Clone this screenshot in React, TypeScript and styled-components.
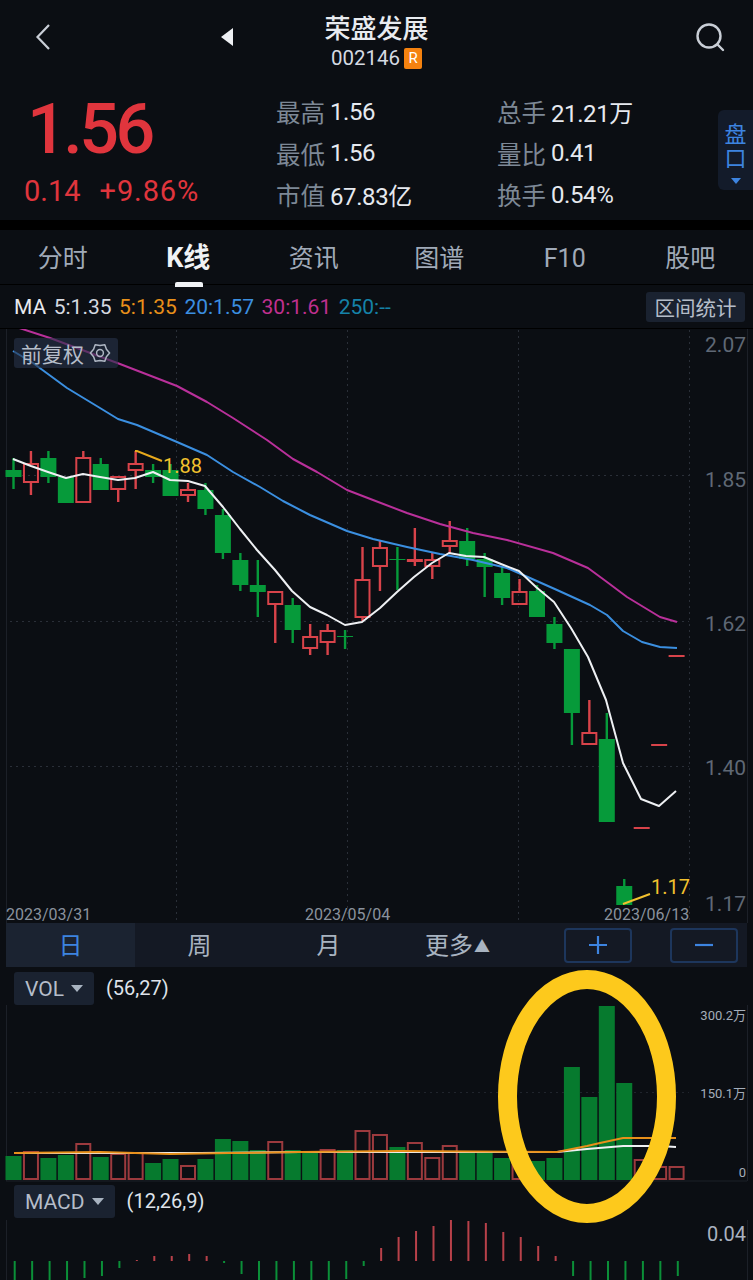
import styled, { createGlobalStyle } from 'styled-components';

const FONT = `Roboto, "Noto Sans CJK SC", sans-serif`;
const UP = '#d8434a';
const DOWN = '#069a3a';
const VOL_UP = '#9c3a3e';
const VOL_DOWN = '#067a2e';
const GRID = '#2a2f38';

const GlobalStyle = createGlobalStyle`
   html, body {
      margin: 0;
      background: #0b0e13;
      font-family: ${FONT};
   }
`;

const Page = styled.main`
   position: relative;
   width: 753px;
   height: 1280px;
   overflow: hidden;
   background: #0b0e13;
   color: #e6e9ef;
`;

const TitleBar = styled.header`
   display: grid;
   grid-template-columns: 221px 12px 1fr 12px 221px;
   align-items: center;
   height: 78px;
`;

const IconSlot = styled.div<{ $pad: string; $justify?: string }>`
   display: flex;
   justify-content: ${(p) => p.$justify || 'flex-start'};
   padding: ${(p) => p.$pad};
`;

const TitleBlock = styled.div`
   display: flex;
   flex-direction: column;
   align-items: center;
   padding-top: 6px;
`;

const StockName = styled.div`
   font-size: 26px;
   line-height: 30px;
   font-weight: 500;
   color: #e8ebf0;
`;

const StockCode = styled.div`
   display: flex;
   align-items: center;
   gap: 4px;
   margin-top: 2px;
   font-size: 20.5px;
   line-height: 24px;
   color: #d5dae2;
`;

const RBadge = styled.span`
   width: 18px;
   height: 21px;
   border-radius: 2px;
   background: #f5820f;
   color: #fff;
   font-size: 15px;
   line-height: 21px;
   text-align: center;
`;

const QuoteRow = styled.section`
   display: flex;
   box-sizing: border-box;
   height: 142px;
   padding-top: 13px;
`;

const PriceCol = styled.div`
   width: 276px;
   flex: none;
   color: #e0353d;
`;

const BigPrice = styled.div`
   padding: 0 0 0 27px;
   font-size: 70px;
   line-height: 76px;
   letter-spacing: -3.5px;
   font-weight: 500;
`;

const ChangeRow = styled.div`
   display: flex;
   gap: 19px;
   padding: 5px 0 0 24px;
   font-size: 29px;
   line-height: 38px;
`;

const PercentText = styled.span`
   letter-spacing: 0.9px;
`;

const StatGrid = styled.div`
   display: grid;
   grid-template-columns: 221px 190px;
   grid-auto-rows: 41.5px;
   align-items: center;
   height: 125px;
   width: 411px;
   flex: none;
`;

const Stat = styled.div`
   display: flex;
   align-items: center;
   gap: 5px;
   font-size: 24px;
   letter-spacing: -0.4px;
   color: #e6e9ef;
   white-space: nowrap;

   span {
      color: #7d8896;
      letter-spacing: 0;
      font-size: 24.5px;
   }
`;

const SideTab = styled.aside`
   flex: none;
   display: flex;
   flex-direction: column;
   align-items: center;
   box-sizing: border-box;
   width: 35px;
   height: 80px;
   margin: 19px 0 0 auto;
   padding-top: 13px;
   border-radius: 6px 0 0 6px;
   background: #131b2a;
   color: #3d84e0;
   font-size: 22px;
   line-height: 24px;

   &::after {
      content: '';
      margin-top: 7px;
      border: 5px solid transparent;
      border-top: 6px solid #3d84e0;
      border-bottom: 0;
   }
`;

const BlackGap = styled.div`
   height: 10px;
   background: #000;
`;

const Tabs = styled.nav`
   display: grid;
   grid-template-columns: repeat(6, 1fr);
   height: 54px;
   border-bottom: 1px solid #000;
`;

const Tab = styled.div<{ $active?: boolean }>`
   position: relative;
   text-align: center;
   font-size: ${(p) => (p.$active ? 27 : 25)}px;
   line-height: 57px;
   font-weight: ${(p) => (p.$active ? 700 : 400)};
   color: ${(p) => (p.$active ? '#f0f2f5' : '#a0aab8')};

   &::after {
      content: '';
      display: ${(p) => (p.$active ? 'block' : 'none')};
      position: absolute;
      left: 50%;
      bottom: 0;
      width: 28px;
      height: 5px;
      margin-left: -13px;
      border-radius: 2px 2px 0 0;
      background: #f0f2f5;
   }
`;

const MaRow = styled.div`
   display: flex;
   align-items: center;
   justify-content: space-between;
   height: 43px;
   padding: 0 8px 0 14px;
   border-bottom: 1px solid #000;
`;

const MaValues = styled.div`
   display: flex;
   gap: 7.5px;
   font-size: 21px;
`;

const MaValue = styled.span<{ $color: string }>`
   color: ${(p) => p.$color};
`;

const Chip = styled.div`
   display: inline-flex;
   align-items: center;
   gap: 7px;
   box-sizing: border-box;
   background: #1a2230;
   border-radius: 3px;
   color: #b5bdc9;
   font-size: 21px;
`;

const StatsChip = styled(Chip)`
   width: 99px;
   height: 30px;
   justify-content: center;
   font-size: 20.5px;
`;

const ChartArea = styled.section`
   position: relative;
   height: 594px;
`;

const ChartSvg = styled.svg`
   display: block;
   font-family: ${FONT};
`;

// the moving average lines show through this chip
const AdjustChip = styled(Chip)`
   position: absolute;
   left: 14px;
   top: 9px;
   width: 104px;
   height: 30px;
   padding-left: 7px;
   gap: 5px;
   background: rgba(38, 50, 72, 0.62);
`;

const PeriodBar = styled.div`
   display: flex;
   align-items: center;
   height: 44px;
   margin: 0 6px;
   background: #141924;
`;

const PeriodCell = styled.div<{ $active?: boolean }>`
   width: 129px;
   height: 44px;
   flex: none;
   text-align: center;
   font-size: 24px;
   line-height: 47px;
   background: ${(p) => (p.$active ? '#1b2331' : 'transparent')};
   color: ${(p) => (p.$active ? '#3d84e0' : '#a8b3c0')};

   small {
      font-size: 16px;
      margin-left: 1px;
      vertical-align: 2px;
   }
`;

const ZoomButton = styled.div<{ $gap: number }>`
   display: flex;
   align-items: center;
   justify-content: center;
   box-sizing: border-box;
   flex: none;
   width: 68px;
   height: 35px;
   margin-left: ${(p) => p.$gap}px;
   border: 2px solid #1d365c;
   border-radius: 4px;
`;

const IndicatorHead = styled.div<{ $height: number; $pad: number }>`
   display: flex;
   align-items: flex-start;
   gap: 12px;
   height: ${(p) => p.$height}px;
   padding: ${(p) => p.$pad}px 0 0 14px;
   box-sizing: border-box;
   font-size: 20px;
   color: #dfe3ea;
`;

const ParamText = styled.span`
   line-height: 33px;
`;

const IndicatorChip = styled(Chip)`
   height: 33px;
   padding: 0 11px;
   font-size: 21px;

   &::after {
      content: '';
      border: 6px solid transparent;
      border-top: 7px solid #a8b3c0;
      border-bottom: 0;
   }
`;

const CircleOverlay = styled.svg`
   position: absolute;
   left: 0;
   top: 0;
   pointer-events: none;
`;

// page x of candle i
const cx = (i: number) => 13.5 + i * 17.45;

// [high, low, bodyTop, bodyBottom, up?]
const candles: [number, number, number, number, boolean][] = [
   [458, 489, 470, 477, false],
   [451, 495, 463, 483, true],
   [451, 483, 458, 477, false],
   [477, 503, 477, 503, false],
   [451, 503, 457, 503, true],
   [458, 490, 464, 490, false],
   [476, 502, 476, 490, true],
   [451, 489, 463, 471, true],
   [464, 483, 470, 477, false],
   [464, 496, 470, 496, false],
   [483, 502, 489, 496, true],
   [483, 515, 490, 509, false],
   [509, 559, 515, 553, false],
   [553, 591, 560, 585, false],
   [560, 617, 585, 592, false],
   [591, 643, 591, 605, true],
   [598, 643, 605, 630, false],
   [624, 655, 636, 649, true],
   [624, 655, 630, 643, true],
   [630, 649, 636, 637, false],
   [547, 621, 579, 618, true],
   [541, 591, 547, 567, true],
   [547, 590, 559, 560, false],
   [528, 566, 559, 562, true],
   [553, 579, 559, 567, true],
   [521, 553, 540, 547, true],
   [528, 566, 541, 559, false],
   [553, 597, 559, 567, false],
   [567, 605, 573, 598, false],
   [579, 605, 591, 605, true],
   [585, 617, 591, 617, false],
   [617, 649, 624, 643, false],
   [649, 745, 649, 713, false],
   [700, 745, 732, 745, true],
   [713, 822, 739, 822, false],
   [879, 905, 886, 905, false],
   [827, 829, 827, 829, true],
   [744, 746, 744, 746, true],
   [655, 657, 655, 657, true],
];

const ma5: [number, number][] = [
   [13, 459], [31, 466], [48, 472], [66, 478], [83, 474], [100, 477], [118, 480], [135, 478],
   [153, 472], [170, 480], [188, 481], [205, 486], [223, 507], [240, 529], [257, 550], [275, 570],
   [292, 591], [310, 607], [327, 615], [345, 625], [362, 622], [380, 608], [397, 592], [414, 577],
   [432, 563], [449, 553], [466, 556], [484, 557], [501, 564], [519, 571], [536, 587], [554, 602],
   [571, 628], [588, 657], [606, 700], [623, 763], [641, 799], [659, 806], [676, 791],
];

const ma20: [number, number][] = [
   [13, 351], [33, 363], [67, 388], [100, 408], [118, 419], [137, 425], [177, 442], [207, 455],
   [233, 472], [260, 487], [283, 501], [310, 515], [347, 531], [373, 539], [407, 547], [440, 554],
   [473, 560], [507, 568], [530, 578], [557, 590], [590, 605], [607, 615], [623, 631], [642, 642],
   [660, 647], [677, 648],
];

const ma30: [number, number][] = [
   [13, 326], [50, 338], [93, 354], [120, 364], [177, 386], [207, 402], [233, 418], [267, 440],
   [293, 459], [317, 472], [347, 490], [373, 500], [407, 513], [440, 524], [473, 533], [507, 540],
   [553, 553], [588, 568], [607, 582], [627, 597], [660, 617], [677, 622],
];

const volumeTops = [
   1156, 1151, 1158, 1155, 1143, 1157, 1153, 1152, 1163, 1159, 1165, 1159, 1139, 1141, 1150, 1141,
   1150, 1153, 1149, 1150, 1130, 1134, 1147, 1142, 1157, 1145, 1152, 1152, 1158, 1158, 1161, 1158,
   1067, 1097, 1006, 1083, 1159, 1166, 1166,
];

// days whose volume bar is green although the candle is red
const volumeDownDays = [17, 33];

const volWhite: [number, number][] = [
   [14, 1153], [200, 1153], [300, 1152], [557, 1152], [587, 1149], [623, 1146], [660, 1146], [676, 1147],
];

const volOrange: [number, number][] = [
   [14, 1153], [100, 1152], [170, 1154], [230, 1153], [300, 1152], [400, 1151], [557, 1152], [587, 1146],
   [600, 1143], [623, 1138], [676, 1138],
];

// MACD bar end per candle, the zero line is y = 1261
const macdEnds = [
   1282, 1282, 1282, 1282, 1278, 1276, 1268, 1260, 1256, 1256, 1254, 1256, 1263, 1274, 1282, 1282, 1282,
   1282, 1282, 1279, 1266, 1248, 1237, 1231, 1226, 1219, 1221, 1223, 1232, 1237, 1246, 1256, 1276, 1282,
   1282, 1282, 1282, 1282, 1276,
];

const pts = (list: [number, number][]) => list.map(([x, y]) => `${x},${y}`).join(' ');

const gearPoints = Array.from({ length: 12 }, (_, k) => {
   const r = k % 2 === 0 ? 7.4 : 9.6;
   const a = (k * Math.PI) / 6 - Math.PI / 2;
   return `${(11 + r * Math.cos(a)).toFixed(2)},${(11 + r * Math.sin(a)).toFixed(2)}`;
}).join(' ');

const GearIcon = () => (
   <svg width='22' height='22' viewBox='0 0 22 22' fill='none' stroke='#aeb6c3' strokeWidth='1.5' strokeLinejoin='round'>
      <polygon points={gearPoints} />
      <circle cx='11' cy='11' r='3.4' />
   </svg>
);

const Candle = ({ i }: { i: number }) => {
   const [high, low, top, bottom, up] = candles[i];
   const x = cx(i);
   if (up) {
      const thin = bottom - top <= 3;
      return (
         <g>
            {high < top && <rect x={x - 1.2} y={high} width={2.4} height={top - high} fill={UP} />}
            {low > bottom && <rect x={x - 1.2} y={bottom} width={2.4} height={low - bottom} fill={UP} />}
            {thin ? (
               <rect x={x - 8} y={top} width={16} height={bottom - top} fill={UP} />
            ) : (
               <rect x={x - 7} y={top + 1} width={14} height={bottom - top - 2} fill='none' stroke={UP} strokeWidth={2} />
            )}
         </g>
      );
   }
   return (
      <g fill={DOWN}>
         {low > high && <rect x={x - 1.2} y={high} width={2.4} height={low - high} />}
         <rect x={x - 8} y={top} width={16} height={bottom - top} />
      </g>
   );
};

const GridLines = () => (
   <g stroke={GRID} strokeWidth={1} strokeDasharray='2 4'>
      {[176.5, 347.5, 518.5, 689.5].map((x) => (
         <line key={x} x1={x} x2={x} y1={330} y2={923} />
      ))}
      {[475.5, 621.5, 766.5].map((y) => (
         <line key={y} x1={10} x2={689} y1={y} y2={y} />
      ))}
   </g>
);

const priceTicks: [string, number][] = [
   ['2.07', 352],
   ['1.85', 487],
   ['1.62', 631],
   ['1.40', 775],
   ['1.17', 911],
];

const dates: [string, number][] = [
   ['2023/03/31', 6],
   ['2023/05/04', 305],
   ['2023/06/13', 604],
];

const KChart = () => (
   <ChartSvg width={753} height={594} viewBox='0 329 753 594'>
      <line x1={6.5} x2={6.5} y1={329} y2={923} stroke='#1c2028' />
      <line x1={747.5} x2={747.5} y1={329} y2={923} stroke='#1c2028' />
      <GridLines />
      {candles.map((_, i) => (
         <Candle key={i} i={i} />
      ))}
      <g fill='none' strokeWidth={2} strokeLinejoin='round'>
         <polyline points={pts(ma30)} stroke='#b9309a' />
         <polyline points={pts(ma20)} stroke='#3b8fe0' />
         <polyline points={pts(ma5)} stroke='#eef0f3' />
      </g>
      <polyline points='135,451 137,451 162,461' fill='none' stroke='#e8a91c' strokeWidth={2} />
      <line x1={623} y1={904} x2={650} y2={894} stroke='#f2c12e' strokeWidth={2} />
      <text x={163} y={473} fontSize={20} fill='#f2c12e'>1.88</text>
      <text x={651} y={894} fontSize={20} fill='#f2c12e'>1.17</text>
      {priceTicks.map(([label, y]) => (
         <text key={label} x={746} y={y} textAnchor='end' fontSize={21} fill='#5f6875'>{label}</text>
      ))}
      {dates.map(([label, x]) => (
         <text key={label} x={x} y={920} fontSize={16} fill='#8a929e'>{label}</text>
      ))}
   </ChartSvg>
);

const VolumeChart = () => (
   <ChartSvg width={753} height={177} viewBox='0 1005 753 177'>
      <line x1={747.5} x2={747.5} y1={1005} y2={1181} stroke='#1c2028' />
      <line x1={6.5} x2={6.5} y1={1005} y2={1181} stroke='#1c2028' />
      <line x1={10} x2={689} y1={1092.5} y2={1092.5} stroke='#20242c' strokeDasharray='2 4' />
      <line x1={6} x2={747} y1={1181} y2={1181} stroke='#1c2028' />
      {volumeTops.map((top, i) =>
         candles[i][4] && !volumeDownDays.includes(i) ? (
            <rect key={i} x={cx(i) - 7} y={top + 1} width={14} height={1180 - top - 2} fill='none' stroke={VOL_UP} strokeWidth={2} />
         ) : (
            <rect key={i} x={cx(i) - 8} y={top} width={16} height={1180 - top} fill={VOL_DOWN} />
         ),
      )}
      <g fill='none' strokeWidth={2}>
         <polyline points={pts(volWhite)} stroke='#eef0f3' />
         <polyline points={pts(volOrange)} stroke='#e8901a' />
      </g>
      <g fontSize={13} fill='#a4adba' textAnchor='end'>
         <text x={746} y={1020}>300.2万</text>
         <text x={746} y={1098}>150.1万</text>
         <text x={746} y={1177}>0</text>
      </g>
   </ChartSvg>
);

const MacdChart = () => (
   <ChartSvg width={753} height={60} viewBox='0 1220 753 60'>
      <line x1={747.5} x2={747.5} y1={1220} y2={1280} stroke='#1c2028' />
      <line x1={6.5} x2={6.5} y1={1220} y2={1280} stroke='#1c2028' />
      {macdEnds.map((end, i) => (
         <rect
            key={i}
            x={cx(i) + 0.2}
            y={Math.min(end, 1261)}
            width={2}
            height={Math.abs(end - 1261)}
            fill={end < 1261 ? '#b8414a' : '#0b8f38'}
         />
      ))}
      <text x={746} y={1241} textAnchor='end' fontSize={20} fill='#a9b2c0'>0.04</text>
   </ChartSvg>
);

const App = () => {
   return (
      <Page>
         <GlobalStyle />
         <TitleBar>
            <IconSlot $pad='0 0 4px 35px'>
               <svg width='16' height='28' viewBox='0 0 16 28' fill='none' stroke='#c9ced6' strokeWidth='2.2'>
                  <path d='M14 2 L2.5 14 L14 26' />
               </svg>
            </IconSlot>
            <IconSlot $pad='0 0 4px 0'>
               <svg width='12' height='18' viewBox='0 0 12 18'>
                  <path d='M12 0 V18 L0 9 Z' fill='#eef0f4' />
               </svg>
            </IconSlot>
            <TitleBlock>
               <StockName>荣盛发展</StockName>
               <StockCode>
                  002146
                  <RBadge>R</RBadge>
               </StockCode>
            </TitleBlock>
            <div />
            <IconSlot $pad='0 28px 4px 0' $justify='flex-end'>
               <svg width='30' height='30' viewBox='0 0 30 30' fill='none' stroke='#c9ced6' strokeWidth='2.4' strokeLinecap='round'>
                  <circle cx='14' cy='14' r='11.5' />
                  <path d='M22.5 22.5 L28 28' />
               </svg>
            </IconSlot>
         </TitleBar>
         <QuoteRow>
            <PriceCol>
               <BigPrice>1.56</BigPrice>
               <ChangeRow>
                  <span>0.14</span>
                  <PercentText>+9.86%</PercentText>
               </ChangeRow>
            </PriceCol>
            <StatGrid>
               <Stat><span>最高</span>1.56</Stat>
               <Stat><span>总手</span>21.21万</Stat>
               <Stat><span>最低</span>1.56</Stat>
               <Stat><span>量比</span>0.41</Stat>
               <Stat><span>市值</span>67.83亿</Stat>
               <Stat><span>换手</span>0.54%</Stat>
            </StatGrid>
            <SideTab>盘<br />口</SideTab>
         </QuoteRow>
         <BlackGap />
         <Tabs>
            <Tab>分时</Tab>
            <Tab $active>K线</Tab>
            <Tab>资讯</Tab>
            <Tab>图谱</Tab>
            <Tab>F10</Tab>
            <Tab>股吧</Tab>
         </Tabs>
         <MaRow>
            <MaValues>
               <MaValue $color='#e7e9ee'>MA</MaValue>
               <MaValue $color='#d5d9e0'>5:1.35</MaValue>
               <MaValue $color='#e8901a'>5:1.35</MaValue>
               <MaValue $color='#3b8fe0'>20:1.57</MaValue>
               <MaValue $color='#c0308f'>30:1.61</MaValue>
               <MaValue $color='#1582a8'>250:--</MaValue>
            </MaValues>
            <StatsChip>区间统计</StatsChip>
         </MaRow>
         <ChartArea>
            <KChart />
            <AdjustChip>
               前复权
               <GearIcon />
            </AdjustChip>
         </ChartArea>
         <PeriodBar>
            <PeriodCell $active>日</PeriodCell>
            <PeriodCell>周</PeriodCell>
            <PeriodCell>月</PeriodCell>
            <PeriodCell>更多<small>▲</small></PeriodCell>
            <ZoomButton $gap={42}>
               <svg width='20' height='20' viewBox='0 0 20 20' stroke='#3d84e0' strokeWidth='2.2'>
                  <path d='M1 10 H19 M10 1 V19' />
               </svg>
            </ZoomButton>
            <ZoomButton $gap={38}>
               <svg width='20' height='20' viewBox='0 0 20 20' stroke='#3d84e0' strokeWidth='2.2'>
                  <path d='M1 10 H19' />
               </svg>
            </ZoomButton>
         </PeriodBar>
         <IndicatorHead $height={38} $pad={5}>
            <IndicatorChip>VOL</IndicatorChip>
            <ParamText>(56,27)</ParamText>
         </IndicatorHead>
         <VolumeChart />
         <IndicatorHead $height={38} $pad={3}>
            <IndicatorChip>MACD</IndicatorChip>
            <ParamText>(12,26,9)</ParamText>
         </IndicatorHead>
         <MacdChart />
         <CircleOverlay width={753} height={1280} viewBox='0 0 753 1280'>
            <ellipse cx={587} cy={1096.5} rx={79.5} ry={117} fill='none' stroke='#fdc91c' strokeWidth={19} />
         </CircleOverlay>
      </Page>
   );
};

export default App;
